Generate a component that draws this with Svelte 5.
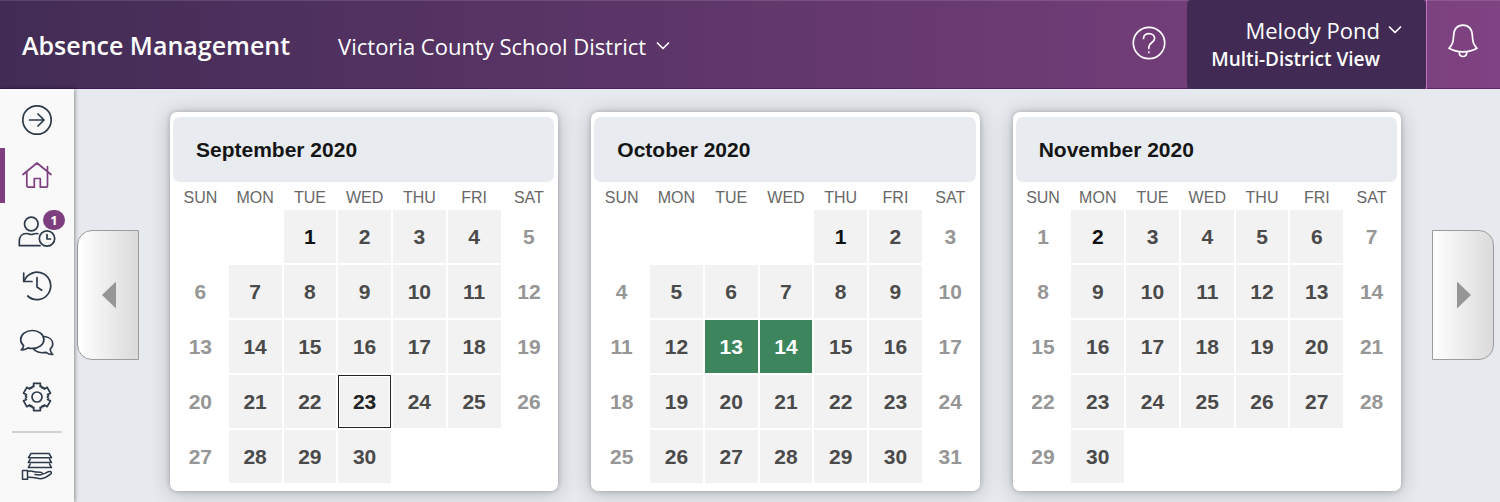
<script lang="ts">
    type Month = {
        name: string;
        startsOn: number;
        days: number;
        firstWorkday: number;
        today?: number;
        absences?: number[];
    };

    const weekdays = ['SUN', 'MON', 'TUE', 'WED', 'THU', 'FRI', 'SAT'];

    const months: Month[] = [
        { name: 'September 2020', startsOn: 2, days: 30, firstWorkday: 1, today: 23 },
        { name: 'October 2020', startsOn: 4, days: 31, firstWorkday: 1, absences: [13, 14] },
        { name: 'November 2020', startsOn: 0, days: 30, firstWorkday: 2 }
    ];

    let notifications = $state(1);

    // Split a month into rows of seven, null for the blanks
    function weeksOf(month: Month) {
        const cells: (number | null)[] = Array(month.startsOn).fill(null);
        for (let d = 1; d <= month.days; d++) cells.push(d);
        while (cells.length % 7) cells.push(null);

        const weeks = [];
        for (let i = 0; i < cells.length; i += 7) weeks.push(cells.slice(i, i + 7));
        return weeks;
    }

    // Six-tooth gear outline centred on 22,22
    function gearPath() {
        const pts = [];
        for (let tooth = 0; tooth < 6; tooth++) {
            for (const [offset, r] of [[-30, 10.3], [-24, 11.6], [-17, 10.8], [-14, 14], [14, 14], [17, 10.8], [24, 11.6]]) {
                const a = ((tooth * 60 + offset - 90) * Math.PI) / 180;
                pts.push(`${(22 + r * Math.cos(a)).toFixed(2)} ${(22 + r * Math.sin(a)).toFixed(2)}`);
            }
        }
        return `M${pts.join('L')}Z`;
    }
</script>

<div class="app">
    <header class="topbar">
        <h1>Absence Management</h1>
        <button class="district">
            Victoria County School District
            <svg class="chevron" viewBox="0 0 14 10"><path d="M1.500 2l5.500 5.500L12.500 2" /></svg>
        </button>
        <div class="spacer"></div>
        <button class="help" aria-label="Help">
            <svg viewBox="0 0 36 36">
                <circle cx="18" cy="18" r="15.700" />
                <path d="M12.500 13.500C12.500 10.500 15 8.700 18 8.700s5.600 1.900 5.600 4.800c0 4-5.800 4-5.800 8.500v1.500M17.800 27v.5" />
            </svg>
        </button>
        <button class="user">
            <span class="user-name">Melody Pond</span>
            <svg class="chevron" viewBox="0 0 14 10"><path d="M1.500 2l5.500 5.500L12.500 2" /></svg>
            <span class="user-view">Multi-District View</span>
        </button>
        <button class="bell" aria-label="Alerts">
            <svg viewBox="1 0 36 36">
                <path d="M4 25.300C8 21.500 8.300 18 8.600 13C8.900 6 11.800 2.200 18 2.200S27 6 27.400 13C27.700 18 28 21.500 32 25.300C24 30 12 30 4 25.300Z" />
                <path d="M14.300 29.500c0 5.300 7.400 5.300 7.400 0" />
            </svg>
        </button>
    </header>

    <div class="body">
        <nav class="sidebar">
            <a href="#expand" aria-label="Expand menu">
                <svg viewBox="0 1 44 44">
                    <circle cx="22" cy="22" r="14.200" />
                    <path d="M14.500 22h14.500M23 16l6 6l-6 6" />
                </svg>
            </a>
            <a href="#home" class="active" aria-label="Home">
                <svg viewBox="0 1 44 44">
                    <path d="M8 21.500L22 10L36 21.500M32.500 18.500V13.500M32.500 18.500V33c0 .8-.5 1.200-1.200 1.200h-6V25.500h-6v8.700h-6c-.9 0-1.500-.5-1.500-1.200V18.500" />
                </svg>
            </a>
            <a href="#people" aria-label="Absences">
                <svg viewBox="0 0 44 44">
                    <circle cx="16.300" cy="15" r="6.800" />
                    <path d="M25 36.700H4.300v-4.500c0-5 3-7.700 7-7.700c2.500 0 3 1 5 1s2.500-1 5-1c.6 0 1.100 0 1.600.200" />
                    <circle cx="32" cy="29.500" r="7.700" />
                    <path d="M32 25.500v4.500h3.500" />
                </svg>
                {#if notifications > 0}
                    <span class="badge">{notifications}</span>
                {/if}
            </a>
            <a href="#history" aria-label="History">
                <svg viewBox="0 0 44 44">
                    <path d="M8.700 9V17.500h8.300" />
                    <path d="M9.200 17A13.700 13.700 0 1 1 12.700 32M22 13.500v9.500l4.700 3.200" />
                </svg>
            </a>
            <a href="#messages" aria-label="Messages">
                <svg viewBox="0 0 44 44">
                    <path d="M17.300 11.500c6.500 0 11.600 4 11.600 9s-5.100 9-11.600 9c-1.500 0-3-.200-4.300-.600c-1.700 1.400-4 2.100-6.700 1.900c1.500-1.200 2.200-2.700 2.300-4.200c-1.900-1.600-2.900-3.700-2.900-6.100c0-5 5.100-9 11.600-9z" />
                    <path d="M29.500 17.500c5 .6 8.300 3.700 8.300 7.500c0 2-1 3.900-2.600 5.200c.1 2 .9 3.800 2.500 5.300c-2.800.1-5-.7-6.600-2.200c-6 1.200-11-.8-13-4" />
                </svg>
            </a>
            <a href="#settings" aria-label="Settings">
                <svg viewBox="0 -1 44 44">
                    <path d={gearPath()} />
                    <circle cx="22" cy="22" r="5" />
                </svg>
            </a>
            <hr />
            <a href="#resources" aria-label="Resources">
                <svg class="fine" viewBox="0 0 44 44">
                    <path d="M16 9.500h18l2.500 4.200h-23zM15.200 15.300l-1.900 3.200h23.200l-1.900-3.200M15.200 20.100l-1.900 3.500h23.200l-1.900-3.500" />
                    <path d="M7.500 26.500h5v8.700h-5zM12.500 27.500c4-1.500 6 .7 9.500.6c3 0 5.500.4 5.500 1.700c0 1.300-3 1.300-7.500.7M27.500 30c3 0 4.500-2.300 7-2.500c2-.2 2.500 1.500 1 2.700c-3 2.300-6 4.300-9.500 4.500c-4 .2-7-2-13.500-1.300" />
                </svg>
            </a>
        </nav>

        <main>
            <button class="pager prev" aria-label="Previous months"><span class="arrow"></span></button>

            <div class="months">
                {#each months as month}
                    <section class="month">
                        <h2>{month.name}</h2>
                        <table>
                            <thead>
                                <tr>
                                    {#each weekdays as day}
                                        <th>{day}</th>
                                    {/each}
                                </tr>
                            </thead>
                            <tbody>
                                {#each weeksOf(month) as week}
                                    <tr>
                                        {#each week as day, i}
                                            <td
                                                class:weekend={i === 0 || i === 6}
                                                class:blank={day === null}
                                                class:first={day === month.firstWorkday}
                                                class:today={day !== null && day === month.today}
                                                class:absence={day !== null && month.absences?.includes(day)}
                                            >{day ?? ''}</td>
                                        {/each}
                                    </tr>
                                {/each}
                            </tbody>
                        </table>
                    </section>
                {/each}
            </div>

            <button class="pager next" aria-label="Next months"><span class="arrow"></span></button>
        </main>
    </div>
</div>

<style>
    :global(body) {
        background: #e6eaef;
    }

    .app {
        display: flex;
        flex-direction: column;
        height: 100vh;
        overflow: hidden;
        font-family: "Open Sans", "Noto Sans", sans-serif;
    }

    button {
        margin: 0;
        padding: 0;
        border: 0;
        background: none;
        color: inherit;
        font: inherit;
        cursor: pointer;
    }

    svg {
        display: block;
        fill: none;
        stroke: currentColor;
        stroke-width: 1.7;
        stroke-linecap: round;
        stroke-linejoin: round;
    }

    /* top bar */
    .topbar {
        display: flex;
        align-items: stretch;
        flex: none;
        box-sizing: border-box;
        height: 89px;
        background: linear-gradient(90deg, #422c55, #7f4282);
        box-shadow: inset 0 1px rgba(255, 255, 255, 0.12), inset 0 -1px rgba(60, 10, 80, 0.5);
        color: #fff;
    }

    h1 {
        display: flex;
        align-items: center;
        margin: 0;
        padding: 0 26px 0 22px;
        font-size: 25px;
        font-weight: 600;
        white-space: nowrap;
    }

    .district {
        display: flex;
        align-items: center;
        gap: 10px;
        padding: 2px 22px 0;
        font-size: 22px;
        white-space: nowrap;
    }

    .chevron {
        width: 14px;
        height: 10px;
    }

    .spacer {
        flex: 1;
    }

    .help,
    .bell {
        display: flex;
        align-items: center;
        justify-content: center;
        padding-bottom: 4px;
    }

    .help {
        width: 77px;
    }

    .help svg,
    .bell svg {
        width: 36px;
        height: 36px;
    }

    .bell {
        width: 74px;
        padding-bottom: 8px;
        border-left: 1px solid #c471c4;
    }

    .user {
        display: grid;
        grid-template-columns: auto 14px;
        align-content: center;
        align-items: center;
        column-gap: 8px;
        padding: 0 24px 2px;
        border-radius: 4px;
        background: #412b54;
        text-align: right;
        white-space: nowrap;
    }

    .user-name {
        font-size: 22px;
        line-height: 30px;
    }

    .user-view {
        font-size: 19px;
        font-weight: 600;
        line-height: 28px;
    }

    .body {
        display: flex;
        flex: 1;
        min-height: 0;
    }

    /* sidebar */
    .sidebar {
        position: relative;
        flex: none;
        width: 74px;
        padding-top: 4px;
        background: #f9f9f9;
        box-shadow: 1px 0 4px rgba(0, 0, 0, 0.4);
    }

    .sidebar a {
        position: relative;
        display: flex;
        align-items: center;
        justify-content: center;
        height: 55px;
        color: #2d3a49;
    }

    .sidebar a.active {
        color: #7d3f80;
        box-shadow: inset 5px 0 #7d3f80;
    }

    .sidebar svg {
        width: 44px;
        height: 44px;
    }

    .sidebar svg.fine {
        stroke-width: 1.5;
    }

    .badge {
        position: absolute;
        top: 7px;
        right: 9px;
        width: 22px;
        height: 20px;
        border-radius: 11px;
        background: #7d3f80;
        color: #fff;
        font-size: 13px;
        font-weight: 700;
        line-height: 20px;
        text-align: center;
    }

    hr {
        height: 2px;
        margin: 8px 12px 5px;
        border: 0;
        background: #d0d2d4;
    }

    /* calendar */
    main {
        display: flex;
        align-items: flex-start;
        gap: 31px;
        flex: 1;
        padding: 23px 6px 0 3px;
    }

    .months {
        display: flex;
        flex: 1;
        gap: 33px;
        font-family: "Liberation Sans", Arial, sans-serif;
    }

    .month {
        flex: 1;
        box-sizing: border-box;
        padding: 5px 1px 6px 2px;
        border-radius: 7px;
        background: #fff;
        box-shadow: 0 0 5px rgba(0, 0, 0, 0.22), 0 2px 20px rgba(0, 0, 0, 0.22);
    }

    h2 {
        margin: 0 3px 0 1px;
        padding: 0 23px;
        border-radius: 7px;
        background: #e8ecf0;
        color: #151515;
        font-size: 21px;
        font-weight: 700;
        line-height: 65px;
    }

    table {
        width: 100%;
        table-layout: fixed;
        border-collapse: separate;
        border-spacing: 2px;
    }

    th,
    td {
        padding: 0;
        text-align: center;
    }

    th {
        padding-top: 4px;
        color: #686868;
        font-size: 16px;
        font-weight: 400;
        line-height: 20px;
    }

    td {
        height: 53px;
        background: #f2f2f2;
        color: #4a4a4a;
        font-size: 21px;
        font-weight: 700;
        line-height: 53px;
    }

    td.blank,
    td.weekend {
        background: none;
    }

    td.weekend {
        color: #969696;
    }

    td.first {
        color: #111;
    }

    td.today {
        box-shadow: inset 0 0 0 1px #222, inset 0 0 0 2px #fff;
        color: #222;
    }

    td.absence {
        background: #3d865d;
        color: #fff;
    }

    .pager {
        display: flex;
        align-items: center;
        justify-content: center;
        flex: none;
        box-sizing: border-box;
        width: 62px;
        height: 130px;
        margin-top: 118px;
        padding-left: 2px;
        border: 1px solid #9c9c9c;
        background: linear-gradient(90deg, #fff, #dadada);
    }

    .prev {
        border-radius: 15px 0 0 15px;
    }

    .next {
        border-radius: 0 15px 15px 0;
    }

    .arrow {
        width: 14px;
        height: 27px;
        background: #969696;
    }

    .prev .arrow {
        clip-path: polygon(100% 0, 100% 100%, 0 50%);
    }

    .next .arrow {
        clip-path: polygon(0 0, 100% 50%, 0 100%);
    }
</style>
